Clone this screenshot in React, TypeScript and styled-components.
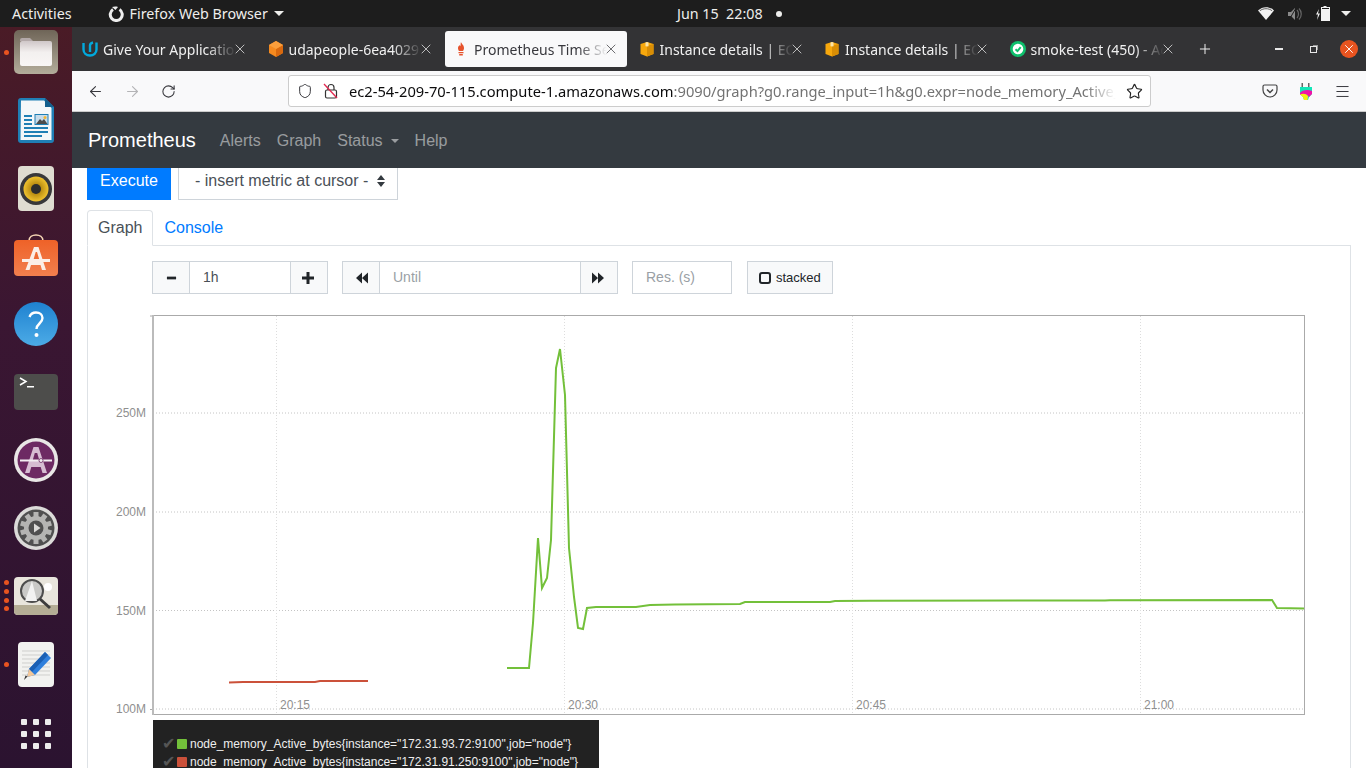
import React from 'react';
import styled, { createGlobalStyle } from 'styled-components';
import { ArrowLeft, ArrowRight, Menu, Plus, RotateCw, Shield, Star, X } from 'lucide-react';

const uiFont = `'Noto Sans', 'Open Sans', sans-serif`;
const pageFont = `'Liberation Sans', Arial, sans-serif`;

const tabs = [
  { title: 'Give Your Application Auto-Deploy', icon: 'udacity' },
  { title: 'udapeople-6ea4029 Stack', icon: 'cube' },
  { title: 'Prometheus Time Series', icon: 'flame', active: true },
  { title: 'Instance details | EC2 Management', icon: 'box' },
  { title: 'Instance details | EC2 Management', icon: 'box' },
  { title: 'smoke-test (450) - Active', icon: 'circle' },
];

const greenLine =
  '507,668 529,668 533,623 538,538 542,588 547,578 551,540 556,368 560,349 565,395 569,548 574,597 578,628 583,629 587,608 596,607 636,607 650,605 675,604.5 740,604 745,602 830,602 835,601 870,600.7 1105,600.5 1110,600.2 1272,600 1277,608 1304,608.5';
const redLine = '229,682.5 243,682 315,682 320,681 368,681';

function Favicon({ name }: { name: string }) {
  if (name === 'udacity') {
    return (
      <svg width="16" height="16" viewBox="0 0 16 16" fill="none" stroke="#02a9dc" strokeWidth="2.400">
        <path d="M1.500 2v6.500c0 3.500 2.800 6 6.500 6s6.500-2.500 6.500-6V1.500" />
        <path d="M8 11V4.500C8 3 9 2 11 1.500" />
      </svg>
    );
  }
  if (name === 'cube') {
    return (
      <svg width="16" height="16" viewBox="0 0 16 16">
        <path d="M8 0l7 4v8l-7 4-7-4V4z" fill="#f58a1f" />
        <path d="M8 8l7-4v8l-7 4z" fill="#d9690f" />
        <path d="M8 0l7 4-7 4-7-4z" fill="#fa9e3c" />
      </svg>
    );
  }
  if (name === 'flame') {
    return (
      <svg width="16" height="16" viewBox="0 0 16 16">
        <path d="M8 1c.5 2 3 3 3 6 0 1.400-.6 2.500-1 3H6c-.4-.5-1-1.600-1-3 0-1.500 1-2 1.500-3 .3.600.5 1 .8 1.200C7.800 4 7.500 2.500 8 1z" fill="#e6522c" />
        <path d="M5.500 11h5v1.200h-5zM6.200 13h3.600v1.500H6.200z" fill="#e6522c" />
      </svg>
    );
  }
  if (name === 'box') {
    return (
      <svg width="16" height="16" viewBox="0 0 16 16">
        <path d="M1.500 3L8 1l6.500 2v10L8 15.500 1.500 13z" fill="#f7a80d" />
        <path d="M8 5l6.500-2v10L8 15.500z" fill="#d98e05" />
        <path d="M6.500 1.500L8 1l1.500.5v3.700L8 5.600 6.500 5.200z" fill="#fbe3a8" />
      </svg>
    );
  }
  return (
    <svg width="16" height="16" viewBox="0 0 16 16">
      <circle cx="8" cy="8" r="8" fill="#0ebf6c" />
      <circle cx="8" cy="8" r="5.300" fill="#fff" />
      <path d="M5.500 8.200l2 1.900 3.200-4" stroke="#0ebf6c" strokeWidth="2" fill="none" />
    </svg>
  );
}

function FilesIcon() {
  return (
    <svg width="44" height="44" viewBox="0 0 44 44">
      <defs>
        <linearGradient id="filesBack" x1="0" y1="0" x2="0" y2="1">
          <stop offset="0" stopColor="#6f6558" />
          <stop offset="1" stopColor="#b3ad9b" />
        </linearGradient>
        <linearGradient id="filesFront" x1="0" y1="0" x2="0" y2="1">
          <stop offset="0" stopColor="#cfc7c8" />
          <stop offset=".45" stopColor="#f3f0ef" />
          <stop offset="1" stopColor="#f8f6f5" />
        </linearGradient>
      </defs>
      <rect width="44" height="44" rx="5" fill="url(#filesBack)" />
      <path d="M6 10a2 2 0 0 1 2-2h8l3 3h-13z" fill="#b3a9a9" />
      <path d="M6 13a2 2 0 0 1 2-2h28a2 2 0 0 1 2 2v21a2 2 0 0 1-2 2H8a2 2 0 0 1-2-2z" fill="url(#filesFront)" />
    </svg>
  );
}

function WriterIcon() {
  return (
    <svg width="36" height="45" viewBox="0 0 36 45">
      <path d="M3 0h24l9 9v33a3 3 0 0 1-3 3H3a3 3 0 0 1-3-3V3a3 3 0 0 1 3-3z" fill="#1f7fb5" />
      <path d="M3 2.500h23L33.500 10v32H2.500z" fill="#f4f7f9" />
      <path d="M27 0l9 9h-9z" fill="#135f8d" />
      <path d="M6 17h8v2H6zM6 21h8v2H6zM6 25h8v2H6zM6 29h24v2H6zM6 33h24v2H6zM6 37h18v2H6z" fill="#1f7fb5" />
      <rect x="16.500" y="16" width="14" height="11" fill="#1f7fb5" />
      <rect x="17.500" y="17" width="12" height="9" fill="#c7dcea" />
      <path d="M18 26l4-5 2 2 2-2 3.500 5z" fill="#4c4c4c" />
      <circle cx="27" cy="19.500" r="1.500" fill="#f2b632" />
    </svg>
  );
}

function RhythmIcon() {
  return (
    <svg width="36" height="45" viewBox="0 0 36 45">
      <defs>
        <radialGradient id="cone" cx=".5" cy=".5" r=".5">
          <stop offset=".4" stopColor="#b98d12" />
          <stop offset="1" stopColor="#f0c22e" />
        </radialGradient>
      </defs>
      <rect width="36" height="45" rx="4" fill="#dfdcd1" />
      <circle cx="18" cy="23" r="16" fill="#38383a" />
      <circle cx="18" cy="23" r="12.500" fill="url(#cone)" />
      <circle cx="18" cy="23" r="5" fill="#2d2d2d" />
    </svg>
  );
}

function SoftwareIcon() {
  return (
    <svg width="44" height="44" viewBox="0 0 44 44">
      <defs>
        <linearGradient id="bag" x1="0" y1="0" x2="0" y2="1">
          <stop offset="0" stopColor="#ee6228" />
          <stop offset="1" stopColor="#f27f4e" />
        </linearGradient>
      </defs>
      <path d="M15 7c0-8 14-8 14 0" fill="none" stroke="#f5d6b4" strokeWidth="1.600" />
      <rect x="0" y="6" width="44" height="36" rx="4" fill="url(#bag)" />
      <path d="M20 13h4.500L32 36h-4l-1.500-5h-9.500L15.500 36h-4z" fill="#fbeee6" />
      <path d="M21.700 18h1.300l2.400 8h-6z" fill="#ee6c33" />
      <path d="M8 25h28v3H8z" fill="#fbeee6" />
    </svg>
  );
}

function HelpIcon() {
  return (
    <svg width="44" height="44" viewBox="0 0 44 44">
      <defs>
        <linearGradient id="helpFill" x1="0" y1="0" x2="0" y2="1">
          <stop offset="0" stopColor="#1f82d0" />
          <stop offset="1" stopColor="#4cabe6" />
        </linearGradient>
      </defs>
      <circle cx="22" cy="22" r="22" fill="url(#helpFill)" />
      <path d="M15.500 15c1-3 3.500-4.500 6.500-4.500 4 0 6.500 2.300 6.500 5.500 0 5.500-6 5.500-6 11" fill="none" stroke="#fff" strokeWidth="2.400" />
      <circle cx="22.500" cy="33" r="2" fill="#fff" />
    </svg>
  );
}

function TerminalIcon() {
  return (
    <svg width="44" height="36" viewBox="0 0 44 36">
      <rect width="44" height="36" rx="4" fill="#4d4d4b" />
      <path d="M6 4l6 3.500L6 11" fill="none" stroke="#fff" strokeWidth="1.500" />
      <path d="M13 12h7v1.500h-7z" fill="#fff" />
    </svg>
  );
}

function SettingsAIcon() {
  return (
    <svg width="44" height="44" viewBox="0 0 44 44">
      <circle cx="22" cy="22" r="22" fill="#e9e7e6" />
      <circle cx="22" cy="22" r="18.500" fill="#6d2a63" />
      <path d="M19.500 9h5L33 35h-4.500l-1.800-6H17.300l-1.800 6H11z" fill="#d6bcd2" />
      <path d="M20.800 15h2.400l2.300 8h-7z" fill="#6d2a63" />
      <path d="M6 21.500h32v2H6z" fill="#f3eef2" />
      <circle cx="27" cy="22.500" r="2" fill="#f3eef2" stroke="#6d2a63" strokeWidth=".8" />
    </svg>
  );
}

function GearIcon() {
  const teeth = Array.from({ length: 10 }, (_, i) => i * 36);
  return (
    <svg width="44" height="44" viewBox="0 0 44 44">
      <circle cx="22" cy="22" r="22" fill="#dcdbd9" />
      <circle cx="22" cy="22" r="18.500" fill="#505050" />
      {teeth.map((deg) => (
        <rect key={deg} x="19.500" y="6" width="5" height="6" fill="#b5b5b3" transform={`rotate(${deg} 22 22)`} />
      ))}
      <circle cx="22" cy="22" r="12" fill="#b5b5b3" />
      <circle cx="22" cy="22" r="7.500" fill="#505050" />
      <path d="M20 17.500l6.500 4.500-6.500 4.500z" fill="#dcdbd9" />
    </svg>
  );
}

function ViewerIcon() {
  return (
    <svg width="44" height="38" viewBox="0 0 44 38">
      <rect width="44" height="38" rx="4" fill="#e8e5dc" />
      <path d="M0 28h44v6a4 4 0 0 1-4 4H4a4 4 0 0 1-4-4z" fill="#b4ad95" />
      <circle cx="34" cy="10" r="4" fill="#fff" />
      <circle cx="18" cy="14" r="11" fill="#c9c9c7" stroke="#4d4d4d" strokeWidth="2" />
      <path d="M18 4l5 20H11z" fill="#f2f2f2" />
      <path d="M26 22l10 9" stroke="#3d3d3d" strokeWidth="3" />
    </svg>
  );
}

function EditorIcon() {
  return (
    <svg width="36" height="45" viewBox="0 0 36 45">
      <rect width="36" height="45" rx="4" fill="#f2f2f0" />
      <path d="M4 9h28M4 13h28M4 17h28M4 21h28M4 25h28M4 29h28M4 33h28" stroke="#cfcfcd" strokeWidth="1" />
      <path d="M27 10l6 6-16 17-8 2 2-8z" fill="#2f7fdc" />
      <path d="M27 10l3 3-16 17-3-3z" fill="#1a5fb4" />
      <path d="M11 27l6 6-8 2z" fill="#f2c79a" />
      <path d="M6 38l3.500-3.500-2-1z" fill="#333" />
    </svg>
  );
}

function LockOffIcon() {
  return (
    <svg width="16" height="16" viewBox="0 0 16 16" fill="none">
      <rect x="2.500" y="7" width="11" height="8" rx="1.500" stroke="#333" strokeWidth="1.200" />
      <path d="M5 7V4.500a3 3 0 0 1 6 0V7" stroke="#333" strokeWidth="1.200" />
      <path d="M1 1l13 14" stroke="#e22850" strokeWidth="1.300" />
    </svg>
  );
}

function PocketIcon() {
  return (
    <svg width="16" height="16" viewBox="0 0 16 16" fill="none">
      <path d="M2.500 2h11A1.500 1.500 0 0 1 15 3.500V7a7 7 0 0 1-14 0V3.500A1.500 1.500 0 0 1 2.500 2z" stroke="#444" strokeWidth="1.200" />
      <path d="M5 6.500L8 9.500l3-3" stroke="#444" strokeWidth="1.500" />
    </svg>
  );
}

function PlugIcon() {
  return (
    <svg width="12" height="17" viewBox="0 0 12 17">
      <path d="M1.500 0h1.500v4H1.500zM8 0h1.500v4H8z" fill="#666" />
      <path d="M0 4h12v7l-3 3-1 3H4l-1-3-3-3z" fill="#12e6b8" />
      <path d="M0 10c2-3 8-4 12-2v3l-3 3-1-1c-1-2-5-2-8-1z" fill="#f012a8" />
      <path d="M0 11.500c3-1.500 6-1 8 1.500l-.5 4H4l-1-3z" fill="#f8ee10" />
    </svg>
  );
}

function GlyphBackward() {
  return (
    <svg width="12" height="12" viewBox="0 0 13 12">
      <path d="M6.500 0v12L0 6zM13 0v12L6.500 6z" fill="#212529" />
    </svg>
  );
}

function GlyphForward() {
  return (
    <svg width="12" height="12" viewBox="0 0 13 12">
      <path d="M0 0l6.500 6L0 12zM6.500 0L13 6l-6.500 6z" fill="#212529" />
    </svg>
  );
}

function GlyphMinus() {
  return (
    <svg width="11" height="12" viewBox="0 0 12 12">
      <path d="M1 4.500h10v3H1z" fill="#212529" />
    </svg>
  );
}

function GlyphPlus() {
  return (
    <svg width="12" height="12" viewBox="0 0 12 12">
      <path d="M4.500 0h3v4.500H12v3H7.500V12h-3V7.500H0v-3h4.500z" fill="#212529" />
    </svg>
  );
}

function Chart() {
  const yTicks = [
    { label: '250M', y: 413 },
    { label: '200M', y: 512 },
    { label: '150M', y: 610.5 },
    { label: '100M', y: 709 },
  ];
  const xTicks = [
    { label: '20:15', x: 276 },
    { label: '20:30', x: 564 },
    { label: '20:45', x: 852 },
    { label: '21:00', x: 1140 },
  ];
  return (
    <ChartSvg viewBox="112 312 1200 406" width="1200" height="406">
      {yTicks.map((t) => (
        <g key={t.label}>
          <line x1="153" x2="1305" y1={t.y} y2={t.y} stroke="#c4c4c4" strokeDasharray="1 2" />
          <text x="146" y={t.y + 4} textAnchor="end">{t.label}</text>
        </g>
      ))}
      {xTicks.map((t) => (
        <g key={t.label}>
          <line x1={t.x + 0.5} x2={t.x + 0.5} y1="316" y2="715" stroke="#ddd" strokeDasharray="1 2" />
          <text x={t.x + 19} y="709" textAnchor="middle">{t.label}</text>
        </g>
      ))}
      <rect x="153.500" y="315.500" width="1151" height="399" fill="none" stroke="#aaa" />
      <path d="M150 316h3M150 709.500h3" stroke="#aaa" />
      <path d="M153 315v400" stroke="#bbb" strokeWidth="2" />
      <polyline points={redLine} fill="none" stroke="#cb513a" strokeWidth="2" />
      <polyline points={greenLine} fill="none" stroke="#73c03a" strokeWidth="2" />
    </ChartSvg>
  );
}

export default function App() {
  return (
    <>
      <GlobalStyle />
      <Screen>
        <TopBar>
          <TopLeft>
            <span>Activities</span>
            <AppMenu>
              <svg width="16" height="16" viewBox="0 0 16 16" fill="none">
                <path d="M5 3.500a6 6 0 1 0 6.500 0" stroke="#eee" strokeWidth="3" />
                <path d="M4 1c1.500-.5 4-.8 6 0L7.500 4z" fill="#eee" />
              </svg>
              <span>Firefox Web Browser</span>
              <Caret />
            </AppMenu>
          </TopLeft>
          <Clock>
            <span>Jun 15&nbsp; 22:08</span>
            <ClockDot />
          </Clock>
          <Tray>
            <svg width="16" height="13" viewBox="0 0 16 13">
              <path d="M0 3.500C4.500-1 11.500-1 16 3.500L8 13z" fill="#f2f2f2" />
              <path d="M1.800 3.800c3.500-2.800 8.900-2.800 12.400 0" stroke="#1d1d1d" strokeWidth=".7" fill="none" />
            </svg>
            <svg width="14" height="14" viewBox="0 0 14 14">
              <path d="M0 5h3l4-4v12L3 9H0z" fill="#8a8a8a" />
              <path d="M9 3c2 2 2 6 0 8M11 1.500c3 3 3 8 0 11" fill="none" stroke="#666" strokeWidth="1.200" />
              <path d="M1 13L8 1" stroke="#1d1d1d" strokeWidth="1" />
            </svg>
            <svg width="14" height="15" viewBox="0 0 14 15">
              <path d="M3 3L0 8.500h2L1 14l3-6.500H2z" fill="#f2f2f2" />
              <path d="M7.500 1V0h3v1H14v14H5V1z" fill="#f2f2f2" />
              <path d="M6 2h7v1H6zM6 14h7" stroke="none" fill="#1d1d1d" />
            </svg>
            <TrayCaret />
          </Tray>
        </TopBar>
        <Desktop>
          <Dock>
            <DockSlot $dots={1}><FilesIcon /></DockSlot>
            <DockSlot><WriterIcon /></DockSlot>
            <DockSlot><RhythmIcon /></DockSlot>
            <DockSlot><SoftwareIcon /></DockSlot>
            <DockSlot><HelpIcon /></DockSlot>
            <DockSlot><TerminalIcon /></DockSlot>
            <DockSlot><SettingsAIcon /></DockSlot>
            <DockSlot><GearIcon /></DockSlot>
            <DockSlot $dots={4}><ViewerIcon /></DockSlot>
            <DockSlot $dots={1}><EditorIcon /></DockSlot>
            <AppGrid>
              {Array.from({ length: 9 }, (_, i) => (
                <AppGridDot key={i} />
              ))}
            </AppGrid>
          </Dock>
          <Browser>
            <TabStrip>
              {tabs.map((tab, index) => (
                <Tab key={index} $active={tab.active}>
                  <Favicon name={tab.icon} />
                  <TabTitle>{tab.title}</TabTitle>
                  <TabClose>
                    <X size={16} strokeWidth={1.1} />
                  </TabClose>
                </Tab>
              ))}
              <NewTab>
                <Plus size={16} strokeWidth={1.5} />
              </NewTab>
              <WindowControls>
                <MinimizeIcon />
                <RestoreIcon />
                <CloseCircle>
                  <X size={14} strokeWidth={1.6} />
                </CloseCircle>
              </WindowControls>
            </TabStrip>
            <Toolbar>
              <NavButtons>
                <ArrowLeft size={17} strokeWidth={1.5} />
                <ArrowRight size={17} strokeWidth={1.5} color="#b4b4b6" />
                <RotateCw size={15} strokeWidth={1.7} />
              </NavButtons>
              <UrlBar>
                <Shield size={16} strokeWidth={1.5} />
                <LockOffIcon />
                <UrlText>
                  <strong>ec2-54-209-70-115.compute-1.amazonaws.com</strong>
                  :9090/graph?g0.range_input=1h&amp;g0.expr=node_memory_Active_bytes&amp;g0.tab=0
                </UrlText>
                <Star size={17} strokeWidth={1.6} color="#222" />
              </UrlBar>
              <ToolbarRight>
                <PocketIcon />
                <PlugIcon />
                <Menu size={17} strokeWidth={1.4} />
              </ToolbarRight>
            </Toolbar>
            <NavBar>
              <Brand>Prometheus</Brand>
              <NavItem>Alerts</NavItem>
              <NavItem>Graph</NavItem>
              <NavItem>
                Status
                <NavCaret />
              </NavItem>
              <NavItem>Help</NavItem>
            </NavBar>
            <Page>
              <ExecuteRow>
                <ExecuteButton>Execute</ExecuteButton>
                <MetricSelect>
                  - insert metric at cursor -
                  <svg width="8" height="12" viewBox="0 0 8 12">
                    <path d="M4 0l4 5H0zM0 7h8l-4 5z" fill="#343a40" />
                  </svg>
                </MetricSelect>
              </ExecuteRow>
              <TabRow>
                <PanelTab $active>Graph</PanelTab>
                <PanelTab>Console</PanelTab>
              </TabRow>
              <Panel>
                <Controls>
                  <Group>
                    <AddOn><GlyphMinus /></AddOn>
                    <Field $width={100}>1h</Field>
                    <AddOn $end><GlyphPlus /></AddOn>
                  </Group>
                  <Group>
                    <AddOn $start><GlyphBackward /></AddOn>
                    <Field $width={200} $placeholder>Until</Field>
                    <AddOn $end><GlyphForward /></AddOn>
                  </Group>
                  <Group>
                    <Field $width={100} $placeholder $first>Res. (s)</Field>
                  </Group>
                  <StackedButton>
                    <StackedBox />
                    stacked
                  </StackedButton>
                </Controls>
                <Chart />
                <Legend>
                  <LegendRow>
                    <LegendCheck>✔</LegendCheck>
                    <Swatch $color="#73c03a" />
                    {'node_memory_Active_bytes{instance="172.31.93.72:9100",job="node"}'}
                  </LegendRow>
                  <LegendRow>
                    <LegendCheck>✔</LegendCheck>
                    <Swatch $color="#cb513a" />
                    {'node_memory_Active_bytes{instance="172.31.91.250:9100",job="node"}'}
                  </LegendRow>
                </Legend>
              </Panel>
            </Page>
          </Browser>
        </Desktop>
      </Screen>
    </>
  );
}

const GlobalStyle = createGlobalStyle`
  html, body {
    margin: 0;
    padding: 0;
    overflow: hidden;
  }
  * {
    box-sizing: border-box;
  }
`;

const Screen = styled.div`
  display: flex;
  flex-direction: column;
  width: 1366px;
  height: 768px;
  overflow: hidden;
  font-family: ${pageFont};
`;

const TopBar = styled.header`
  display: grid;
  grid-template-columns: 665px auto 1fr;
  align-items: center;
  flex: 0 0 27px;
  padding: 0 15px 0 12px;
  background: #1d1d1d;
  color: #eeeeec;
  font-family: ${uiFont};
  font-size: 14.300px;
`;

const TopLeft = styled.div`
  display: flex;
  align-items: center;
  gap: 36px;
`;

const AppMenu = styled.div`
  display: flex;
  align-items: center;
  gap: 6px;
`;

const Caret = styled.span`
  width: 0;
  height: 0;
  border-left: 5px solid transparent;
  border-right: 5px solid transparent;
  border-top: 5px solid #eeeeec;
`;

const TrayCaret = styled(Caret)`
  margin-left: -3px;
`;

const Clock = styled.div`
  display: flex;
  align-items: center;
  gap: 13px;
`;

const ClockDot = styled.span`
  width: 6px;
  height: 6px;
  border-radius: 50%;
  background: #eeeeec;
`;

const Tray = styled.div`
  display: flex;
  align-items: center;
  justify-content: flex-end;
  gap: 14px;
`;

const Desktop = styled.div`
  display: flex;
  flex: 1;
  min-height: 0;
`;

const Dock = styled.aside`
  display: flex;
  flex-direction: column;
  align-items: center;
  flex: 0 0 72px;
  gap: 24px;
  padding-top: 3px;
  background: linear-gradient(180deg, #4a1b26 0%, #3a1632 40%, #2b1330 100%);
`;

const DockSlot = styled.div<{ $dots?: number }>`
  position: relative;
  display: flex;
  align-items: center;
  justify-content: center;
  width: 72px;
  height: 44px;

  &::before {
    content: '';
    position: absolute;
    left: 4px;
    top: ${(p) => (p.$dots === 4 ? '6px' : '20px')};
    width: 5px;
    height: 5px;
    border-radius: 50%;
    background: ${(p) => (p.$dots ? '#e95420' : 'transparent')};
    box-shadow: ${(p) => (p.$dots === 4 ? '0 9px #e95420, 0 18px #e95420, 0 26px #e95420' : 'none')};
  }
`;

const AppGrid = styled.div`
  display: grid;
  grid-template-columns: repeat(3, 6px);
  gap: 6px;
  margin-top: 9px;
`;

const AppGridDot = styled.span`
  width: 6px;
  height: 6px;
  border-radius: 1px;
  background: #ececec;
`;

const Browser = styled.main`
  display: flex;
  flex-direction: column;
  flex: 1;
  min-width: 0;
`;

const TabStrip = styled.div`
  display: flex;
  align-items: center;
  flex: 0 0 44px;
  padding-left: 2px;
  background: #333335;
  font-family: ${uiFont};
  font-size: 14px;
`;

const Tab = styled.div<{ $active?: boolean }>`
  display: flex;
  align-items: center;
  gap: 5px;
  width: 182px;
  height: 36px;
  margin-right: 3.500px;
  padding: 0 8px;
  border-radius: 3px;
  background: ${(p) => (p.$active ? '#f9f9fa' : 'transparent')};
  color: ${(p) => (p.$active ? '#38383d' : '#f0f0f0')};

  svg {
    flex: none;
  }
`;

const TabTitle = styled.span`
  flex: 1;
  min-width: 0;
  overflow: hidden;
  white-space: nowrap;
  -webkit-mask-image: linear-gradient(90deg, #000 78%, transparent 100%);
  mask-image: linear-gradient(90deg, #000 78%, transparent 100%);
`;

const TabClose = styled.span`
  display: flex;
  margin-left: -9px;
`;

const NewTab = styled.div`
  display: flex;
  margin-left: 10px;
  color: #f0f0f0;
`;

const WindowControls = styled.div`
  display: flex;
  align-items: center;
  gap: 23px;
  margin-left: auto;
  padding-right: 8px;
`;

const MinimizeIcon = styled.span`
  width: 8px;
  height: 2px;
  background: #e8e8e8;
`;

const RestoreIcon = styled.span`
  width: 7px;
  height: 7px;
  margin-left: 4px;
  border: 1px solid #e8e8e8;
  box-shadow: 2px -2px 0 -1px #999;
`;

const CloseCircle = styled.span`
  display: flex;
  align-items: center;
  justify-content: center;
  width: 18px;
  height: 18px;
  border-radius: 50%;
  background: #e95420;
  color: #fff;
`;

const Toolbar = styled.div`
  display: flex;
  align-items: center;
  flex: 0 0 41px;
  padding: 0 15px 0 15px;
  border-bottom: 1px solid #ccc;
  background: #f9f9fa;
  color: #38383d;
`;

const NavButtons = styled.div`
  display: flex;
  align-items: center;
  gap: 20px;
  width: 201px;
`;

const UrlBar = styled.div`
  display: flex;
  align-items: center;
  width: 863px;
  height: 32px;
  padding: 0 7px 0 8px;
  gap: 10px;
  border: 1px solid #ccc;
  border-radius: 3px;
  background: #fff;
`;

const UrlText = styled.div`
  flex: 1;
  min-width: 0;
  overflow: hidden;
  white-space: nowrap;
  color: #737373;
  font-family: ${uiFont};
  font-size: 14.700px;
  -webkit-mask-image: linear-gradient(90deg, #000 96%, transparent 100%);
  mask-image: linear-gradient(90deg, #000 96%, transparent 100%);

  strong {
    color: #0c0c0d;
    font-weight: 400;
  }
`;

const ToolbarRight = styled.div`
  display: flex;
  align-items: center;
  gap: 22px;
  margin-left: auto;
`;

const NavBar = styled.nav`
  display: flex;
  align-items: center;
  flex: 0 0 56px;
  padding: 0 16px;
  background: #343a40;
`;

const Brand = styled.span`
  margin-right: 24px;
  color: #fff;
  font-size: 20px;
`;

const NavItem = styled.span`
  display: flex;
  align-items: center;
  margin-right: 16px;
  padding-top: 1px;
  color: rgba(255, 255, 255, 0.5);
  font-size: 16px;
`;

const NavCaret = styled.span`
  width: 0;
  height: 0;
  margin-left: 8px;
  border-left: 4px solid transparent;
  border-right: 4px solid transparent;
  border-top: 4px solid rgba(255, 255, 255, 0.5);
`;

const Page = styled.section`
  flex: 1;
  min-height: 0;
  overflow: hidden;
  padding: 0 15px;
  background: #fff;
  color: #495057;
  font-size: 16px;
`;

const ExecuteRow = styled.div`
  display: flex;
  gap: 7px;
  height: 32px;
`;

const ExecuteButton = styled.button`
  width: 84px;
  padding: 0 0 6px;
  border: 0;
  background: #007bff;
  color: #fff;
  font-family: inherit;
  font-size: 16px;
`;

const MetricSelect = styled.div`
  display: flex;
  align-items: center;
  gap: 9px;
  width: 220px;
  padding: 0 0 6px 16px;
  border: 1px solid #ced4da;
  border-top: 0;
`;

const TabRow = styled.div`
  display: flex;
  margin-top: 10px;
`;

const PanelTab = styled.div<{ $active?: boolean }>`
  position: relative;
  height: 36px;
  padding: 8px 10px;
  border: 1px solid ${(p) => (p.$active ? '#dee2e6' : 'transparent')};
  border-bottom-color: ${(p) => (p.$active ? '#fff' : 'transparent')};
  border-radius: 4px 4px 0 0;
  margin-bottom: -1px;
  color: ${(p) => (p.$active ? '#495057' : '#007bff')};
  background: ${(p) => (p.$active ? '#fff' : 'transparent')};
  z-index: 1;
`;

const Panel = styled.div`
  padding-top: 15px;
  border: 1px solid #dee2e6;
  border-bottom: 0;
`;

const Controls = styled.div`
  display: flex;
  gap: 14px;
  height: 33px;
  margin-left: 64px;
`;

const Group = styled.div`
  display: flex;
`;

const AddOn = styled.div<{ $start?: boolean; $end?: boolean }>`
  display: flex;
  align-items: center;
  justify-content: center;
  width: 38px;
  padding-left: ${(p) => (p.$start ? '2px' : '0')};
  padding-right: ${(p) => (p.$end ? '3px' : '0')};
  border: 1px solid #ced4da;
  background: #f8f9fa;
`;

const Field = styled.div<{ $width: number; $placeholder?: boolean; $first?: boolean }>`
  display: flex;
  align-items: center;
  width: ${(p) => p.$width}px;
  padding: 0 0 2px 13px;
  border: 1px solid #ced4da;
  border-left-width: ${(p) => (p.$first ? '1px' : '0')};
  border-right-width: ${(p) => (p.$first ? '1px' : '0')};
  color: ${(p) => (p.$placeholder ? '#9a9fa5' : '#495057')};
  font-size: 14px;
`;

const StackedButton = styled.div`
  display: flex;
  align-items: center;
  gap: 5px;
  width: 86px;
  margin-left: 1px;
  padding-left: 11px;
  border: 1px solid #ced4da;
  background: #f8f9fa;
  color: #212529;
  font-size: 13px;
`;

const StackedBox = styled.span`
  width: 12px;
  height: 12px;
  border: 2px solid #212529;
  border-radius: 3px;
`;

const ChartSvg = styled.svg`
  display: block;
  margin: 18px 0 0 24px;

  text {
    fill: #8f8f8f;
    font-family: ${pageFont};
    font-size: 12px;
  }
`;

const Legend = styled.div`
  width: 446px;
  height: 60px;
  margin: 2px 0 0 65px;
  padding-top: 15px;
  background: #222;
  color: #eee;
  font-size: 12px;
`;

const LegendRow = styled.div`
  display: flex;
  align-items: center;
  height: 18px;
  padding-left: 9px;
  white-space: nowrap;
`;

const LegendCheck = styled.span`
  width: 15px;
  color: #555;
  font-family: 'DejaVu Sans', sans-serif;
  font-size: 16px;
  line-height: 18px;
`;

const Swatch = styled.span<{ $color: string }>`
  width: 10px;
  height: 10px;
  margin-right: 3px;
  border-radius: 1px;
  background: ${(p) => p.$color};
`;
